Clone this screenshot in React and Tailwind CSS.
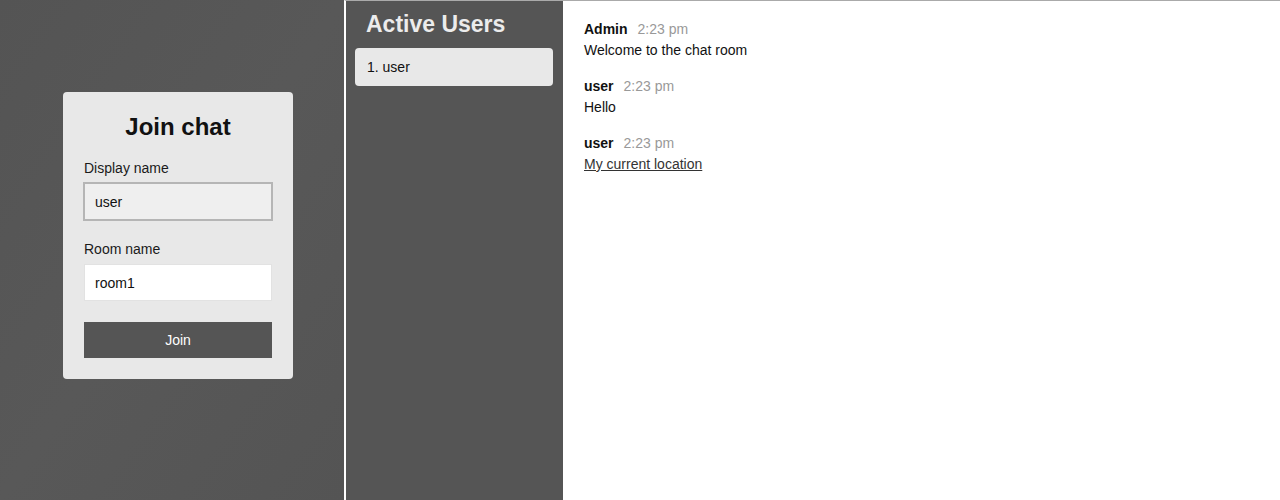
import React from "react";

const messages = [
  { name: "Admin", time: "2:23 pm", text: "Welcome to the chat room" },
  { name: "user", time: "2:23 pm", text: "Hello" },
  { name: "user", time: "2:23 pm", text: "My current location", link: true },
];

const JoinForm = () => (
  <div className="w-[344px] shrink-0 bg-[#555] bg-gradient-to-br from-[#545454] via-[#585858] to-[#545454] pl-[63px] pt-[92px]">
    <div className="w-[230px] rounded-[4px] bg-[#e8e8e8] px-[21px] pt-[21px] pb-[21px]">
      <h1 className="text-center text-[24px] font-bold leading-[28px] text-[#111]">Join chat</h1>
      <label className="mt-[18px] block text-[14px] leading-[18px] text-[#1a1a1a]">Display name</label>
      <input
        className="mt-[6px] block h-[37px] w-full border border-[#b5b5b5] bg-[#efefef] px-[10px] text-[14px] text-[#111] shadow-[0_0_0_1px_#b5b5b5] outline-none"
        defaultValue="user"
      />
      <label className="mt-[20px] block text-[14px] leading-[18px] text-[#1a1a1a]">Room name</label>
      <input
        className="mt-[6px] block h-[37px] w-full border border-[#e2e2e2] bg-white px-[10px] text-[14px] text-[#111] outline-none"
        defaultValue="room1"
      />
      <button className="mt-[21px] block h-[36px] w-full bg-[#555] text-[14px] text-white">Join</button>
    </div>
  </div>
);

const Sidebar = () => (
  <div className="w-[217px] shrink-0 bg-[#555]">
    <h2 className="px-[20px] pt-[10px] text-[23px] font-bold leading-[26px] text-[#ececec]">Active Users</h2>
    <ul className="mt-[11px] pl-[9px] pr-[10px]">
      <li className="flex h-[38px] items-center rounded-[4px] bg-[#e8e8e8] px-[12px] text-[14px] text-[#111]">1. user</li>
    </ul>
  </div>
);

const Chat = () => (
  <div className="flex-1 bg-white pl-[21px] pt-[18px]">
    {messages.map((m, i) => (
      <div key={i} className="mb-[15px]">
        <p className="text-[14px] leading-[20px]">
          <span className="font-bold text-[#111]">{m.name}</span>
          <span className="ml-[10px] text-[#999]">{m.time}</span>
        </p>
        {m.link ? (
          <a href="#" className="block text-[14px] leading-[22px] text-[#333] underline">{m.text}</a>
        ) : (
          <p className="text-[14px] leading-[22px] text-[#111]">{m.text}</p>
        )}
      </div>
    ))}
  </div>
);

export default function App() {
  return (
    <div className="flex h-[500px] w-full overflow-hidden font-['Liberation_Sans',Arial,sans-serif]">
      <JoinForm />
      <div className="flex flex-1 border-l-2 border-t border-l-white border-t-[#aaa]">
        <Sidebar />
        <Chat />
      </div>
    </div>
  );
}
